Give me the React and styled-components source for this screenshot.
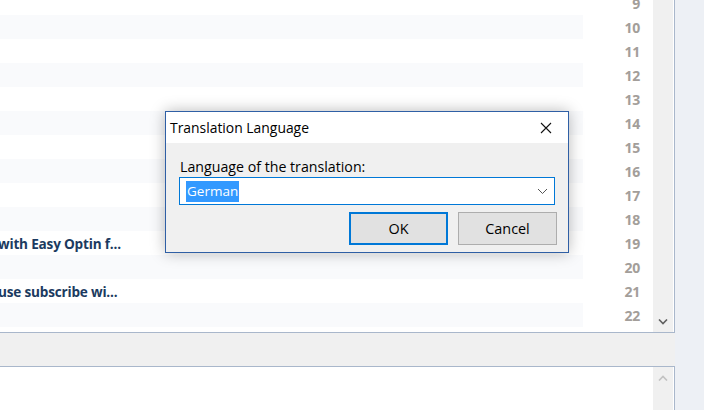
import React from "react";
import styled, { createGlobalStyle } from "styled-components";

const Global = createGlobalStyle`
  html, body { margin: 0; padding: 0; }
  body { background: #f0f0f0; font-family: "Open Sans", "Noto Sans", sans-serif; }
`;

const Screen = styled.div`
  position: relative;
  width: 704px;
  height: 410px;
  overflow: hidden;
  display: flex;
  background: #f0f0f0;
`;

const MainColumn = styled.div`
  width: 675px;
  display: flex;
  flex-direction: column;
`;

const SideStrip = styled.div`
  flex: 1;
  background: #edf0f5;
`;

const Panel = styled.div`
  display: flex;
  background: #fff;
  border-right: 1px solid #a9b7cb;
  ${(p) => (p.$top ? "border-bottom: 1px solid #a9b7cb; height: 332px;" : "border-top: 1px solid #a9b7cb; flex: 1;")}
  overflow: hidden;
`;

const Gap = styled.div`
  height: 33px;
  background: #f0f0f0;
`;

const List = styled.div`
  width: 653px;
  display: flex;
  flex-direction: column;
  margin-top: -9px;
`;

const Row = styled.div`
  display: flex;
  height: 24px;
  flex-shrink: 0;
`;

const TitleCell = styled.div`
  width: 583px;
  background: ${(p) => (p.$alt ? "#f9fafc" : "#fff")};
  display: flex;
  align-items: center;
  overflow: hidden;
  white-space: nowrap;
  font-weight: 700;
  font-size: 13.6px;
  color: #1b3a60;
`;

const TitleText = styled.span`
  margin-left: -2px;
  letter-spacing: -0.2px;
`;

const NumCell = styled.div`
  flex: 1;
  display: flex;
  align-items: center;
  justify-content: flex-end;
  padding-right: 13px;
  font-weight: 700;
  font-size: 14px;
  color: #a39e9a;
  letter-spacing: -0.3px;
`;

const ScrollTrack = styled.div`
  width: 20px;
  background: #f0f0f0;
  display: flex;
  flex-direction: column;
  justify-content: ${(p) => (p.$up ? "flex-start" : "flex-end")};
  align-items: center;
`;

const ArrowBox = styled.div`
  height: ${(p) => (p.$up ? "22px" : "20px")};
  display: flex;
  align-items: center;
  justify-content: center;
`;

const Dialog = styled.div`
  position: absolute;
  left: 165px;
  top: 111px;
  width: 402px;
  height: 140px;
  border: 1px solid #2f5fa5;
  background: #f0f0f0;
  box-shadow: 0 0 14px rgba(0, 0, 0, 0.28);
  display: flex;
  flex-direction: column;
`;

const TitleBar = styled.div`
  height: 31px;
  background: #fff;
  display: flex;
  align-items: center;
  justify-content: space-between;
  padding-left: 4px;
  font-size: 13.9px;
  color: #000;
`;

const CloseBtn = styled.div`
  width: 44px;
  height: 31px;
  display: flex;
  align-items: center;
  justify-content: center;
`;

const Body = styled.div`
  flex: 1;
  display: flex;
  flex-direction: column;
  padding: 16px 13px 0 13px;
`;

const Label = styled.div`
  font-size: 14.2px;
  line-height: 16px;
  color: #000;
  padding-left: 1px;
`;

const Combo = styled.div`
  margin-top: 2px;
  height: 26px;
  border: 1px solid #0078d7;
  background: #fff;
  display: flex;
  align-items: center;
  justify-content: space-between;
  padding: 0 6px 0 6px;
`;

const Selected = styled.span`
  background: #3399ff;
  color: #fff;
  font-size: 13.5px;
  line-height: 21px;
  padding: 0 1px;
`;

const Buttons = styled.div`
  display: flex;
  justify-content: flex-end;
  gap: 10px;
  margin-top: 7px;
  margin-right: -2px;
`;

const Button = styled.div`
  box-sizing: border-box;
  width: 99px;
  height: 33px;
  background: #e1e1e1;
  border: ${(p) => (p.$primary ? "2px solid #0078d7" : "1px solid #adadad")};
  display: flex;
  align-items: center;
  justify-content: center;
  font-size: 14.4px;
  color: #000;
`;

const rows = [];
for (let n = 9; n <= 22; n++) {
  let text = "";
  if (n === 19) text = "with Easy Optin f...";
  if (n === 21) text = "use subscribe wi...";
  rows.push({ n, text });
}

const Chevron = ({ up, color }) => (
  <svg width="10" height="6" viewBox="0 0 10 6">
    <path
      d={up ? "M1 5.5 L5 1.5 L9 5.5" : "M1 0.5 L5 4.5 L9 0.5"}
      stroke={color}
      strokeWidth="1.6"
      fill="none"
    />
  </svg>
);

export default function App() {
  return (
    <>
      <Global />
      <Screen>
        <MainColumn>
          <Panel $top>
            <List>
              {rows.map((r) => (
                <Row key={r.n}>
                  <TitleCell $alt={r.n % 2 === 0}>
                    {r.text && <TitleText>{r.text}</TitleText>}
                  </TitleCell>
                  <NumCell>{r.n}</NumCell>
                </Row>
              ))}
            </List>
            <ScrollTrack>
              <ArrowBox>
                <Chevron color="#606060" />
              </ArrowBox>
            </ScrollTrack>
          </Panel>
          <Gap />
          <Panel>
            <List />
            <ScrollTrack $up>
              <ArrowBox $up>
                <Chevron up color="#c2c2c2" />
              </ArrowBox>
            </ScrollTrack>
          </Panel>
        </MainColumn>
        <SideStrip />
        <Dialog>
          <TitleBar>
            <span>Translation Language</span>
            <CloseBtn>
              <svg width="12" height="12" viewBox="0 0 12 12">
                <path d="M1 1 L11 11 M11 1 L1 11" stroke="#111" strokeWidth="1.1" />
              </svg>
            </CloseBtn>
          </TitleBar>
          <Body>
            <Label>Language of the translation:</Label>
            <Combo>
              <Selected>German</Selected>
              <svg width="11" height="7" viewBox="0 0 11 7">
                <path d="M1 1 L5.5 5.5 L10 1" stroke="#555" strokeWidth="1" fill="none" />
              </svg>
            </Combo>
            <Buttons>
              <Button $primary>OK</Button>
              <Button>Cancel</Button>
            </Buttons>
          </Body>
        </Dialog>
      </Screen>
    </>
  );
}
